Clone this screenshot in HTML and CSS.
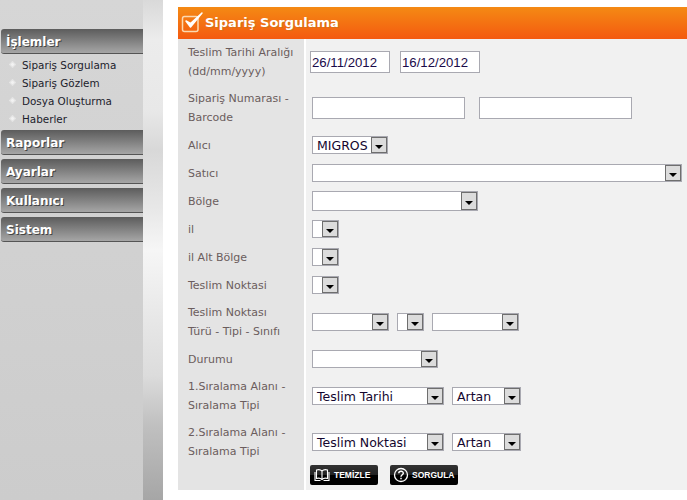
FILE: index.html
```html
<!DOCTYPE html>
<html>
<head>
    <meta charset="UTF-8">
    <title>Sipariş Sorgulama</title>
    <link rel="stylesheet" href="styles.css">
</head>
<body>
    <div class="page">
        <div class="sidebar">
            <div class="menu-head">İşlemler</div>
            <ul class="submenu">
                <li>Sipariş Sorgulama</li>
                <li>Sipariş Gözlem</li>
                <li>Dosya Oluşturma</li>
                <li>Haberler</li>
            </ul>
            <div class="menu-head">Raporlar</div>
            <div class="menu-head">Ayarlar</div>
            <div class="menu-head">Kullanıcı</div>
            <div class="menu-head">Sistem</div>
        </div>
        <div class="band"></div>
        <div class="content">
            <div class="title">
                <svg class="title-icon" width="24" height="26" viewBox="0 0 24 26">
                    <rect x="1.500" y="7.500" width="15.500" height="15" rx="2" fill="none" stroke="#fbd9b0" stroke-width="1.500"/>
                    <path d="M5 12 L9.500 18 L21 4 L9.500 14.500 Z" fill="#fff" stroke="#fff" stroke-width="1.500" stroke-linejoin="round"/>
                </svg>
                Sipariş Sorgulama
            </div>

            <div class="row tall">
                <div class="lbl">Teslim Tarihi Aralığı (dd/mm/yyyy)</div>
                <div class="fld date-fld">
                    <input class="txt date" type="text" value="26/11/2012">
                    <input class="txt date" type="text" value="16/12/2012">
                </div>
            </div>
            <div class="row tall">
                <div class="lbl">Sipariş Numarası - Barcode</div>
                <div class="fld gap14">
                    <input class="txt num" type="text">
                    <input class="txt num" type="text">
                </div>
            </div>
            <div class="row">
                <div class="lbl">Alıcı</div>
                <div class="fld"><div class="sel w76"><span class="val">MIGROS</span><span class="arrow"><i></i></span></div></div>
            </div>
            <div class="row">
                <div class="lbl">Satıcı</div>
                <div class="fld"><div class="sel w370"><span class="val"></span><span class="arrow"><i></i></span></div></div>
            </div>
            <div class="row">
                <div class="lbl">Bölge</div>
                <div class="fld"><div class="sel w166 h20"><span class="val"></span><span class="arrow"><i></i></span></div></div>
            </div>
            <div class="row">
                <div class="lbl">il</div>
                <div class="fld"><div class="sel w27"><span class="val"></span><span class="arrow"><i></i></span></div></div>
            </div>
            <div class="row">
                <div class="lbl">il Alt Bölge</div>
                <div class="fld"><div class="sel w27"><span class="val"></span><span class="arrow"><i></i></span></div></div>
            </div>
            <div class="row">
                <div class="lbl">Teslim Noktasi</div>
                <div class="fld"><div class="sel w27"><span class="val"></span><span class="arrow"><i></i></span></div></div>
            </div>
            <div class="row tall">
                <div class="lbl"><span>Teslim Noktası<br>Türü - Tipi - Sınıfı</span></div>
                <div class="fld gap8">
                    <div class="sel w77"><span class="val"></span><span class="arrow"><i></i></span></div>
                    <div class="sel w27"><span class="val"></span><span class="arrow"><i></i></span></div>
                    <div class="sel w87"><span class="val"></span><span class="arrow"><i></i></span></div>
                </div>
            </div>
            <div class="row">
                <div class="lbl">Durumu</div>
                <div class="fld"><div class="sel w126"><span class="val"></span><span class="arrow"><i></i></span></div></div>
            </div>
            <div class="row tall">
                <div class="lbl">1.Sıralama Alanı - Sıralama Tipi</div>
                <div class="fld gap8">
                    <div class="sel w132"><span class="val">Teslim Tarihi</span><span class="arrow"><i></i></span></div>
                    <div class="sel w69"><span class="val">Artan</span><span class="arrow"><i></i></span></div>
                </div>
            </div>
            <div class="row tall">
                <div class="lbl">2.Sıralama Alanı - Sıralama Tipi</div>
                <div class="fld gap8">
                    <div class="sel w132"><span class="val">Teslim Noktasi</span><span class="arrow"><i></i></span></div>
                    <div class="sel w69"><span class="val">Artan</span><span class="arrow"><i></i></span></div>
                </div>
            </div>
            <div class="row last">
                <div class="lbl"></div>
                <div class="fld btn-fld">
                    <div class="btn">
                        <svg width="18" height="14" viewBox="0 0 18 14">
                            <path d="M9 3 C7.500 1.500 5 1.500 3.500 2 L3.500 10.500 C5 10 7.500 10 9 11.500 C10.500 10 13 10 14.500 10.500 L14.500 2 C13 1.500 10.500 1.500 9 3 Z M9 3 L9 11.500 M2 4 L2 12.500 L7.500 12.500 M16 4 L16 12.500 L10.500 12.500" fill="none" stroke="#fff" stroke-width="1.100"/>
                        </svg>
                        <span>TEMİZLE</span>
                    </div>
                    <div class="btn">
                        <svg width="16" height="16" viewBox="0 0 16 16">
                            <circle cx="8" cy="8" r="6.500" fill="none" stroke="#fff" stroke-width="1.300"/>
                            <path d="M5.800 6.300 C5.800 3.600 10.300 3.600 10.300 6.200 C10.300 7.800 8 7.800 8 9.800 M8 10.700 L8 12.200" fill="none" stroke="#fff" stroke-width="1.500"/>
                        </svg>
                        <span>SORGULA</span>
                    </div>
                </div>
            </div>
        </div>
    </div>
</body>
</html>
```

FILE: styles.css
```css
html, body {
    margin: 0;
    padding: 0;
}
body {
    background: #ffffff;
    font-family: 'DejaVu Sans', sans-serif;
    overflow: hidden;
}
.page {
    display: flex;
    height: 500px;
    width: 687px;
}

/* left menu */
.sidebar {
    width: 142px;
    padding: 29px 0 0 1px;
    background: linear-gradient(to bottom, #d6d6d6, #cccccc);
}
.band {
    width: 20px;
    background: linear-gradient(to bottom, #d9d9d9 0, #ececec 8%, #e8e8e8 22%, #d8d8d8 30%, #e8e8e8 42%, #f6f6f6 50%, #e6e6e6 65%, #dcdcdc 75%, #c0c0c0 85%, #a6a6a6 100%);
}
.menu-head {
    height: 24px;
    line-height: 27px;
    margin-bottom: 4px;
    padding-left: 5px;
    border-bottom: 1px solid #555555;
    border-radius: 3px 0 0 3px;
    background: linear-gradient(to bottom, #5c5c5c, #a6a6a6);
    color: #ffffff;
    font-size: 12px;
    font-weight: bold;
    text-shadow: 1px 1px 0 #444444;
}
.submenu {
    list-style: none;
    margin: -2px 0 0;
    padding: 0 0 2px 21px;
    font-size: 10.400px;
    color: #1c1c2c;
}
.submenu li {
    position: relative;
    height: 18px;
    line-height: 18px;
}
.submenu li::before {
    content: "";
    position: absolute;
    left: -12px;
    top: 6px;
    width: 5px;
    height: 5px;
    background: #f2f2f2;
    box-shadow: inset 0 0 0 1px #e2e2e2;
    transform: rotate(45deg);
}

/* form panel */
.content {
    width: 509px;
    margin-left: 15px;
    padding-top: 7px;
}
.title {
    display: flex;
    align-items: center;
    height: 32px;
    padding: 0 0 2px 3px;
    box-sizing: border-box;
    background: linear-gradient(to bottom, #f48a14, #f45a10);
    color: #ffffff;
    font-size: 13px;
    font-weight: bold;
    text-shadow: 1px 1px 0 #d8701a;
}
.row {
    display: flex;
    height: 28px;
}
.tall {
    height: 46px;
}
.last {
    height: 25px;
}
.lbl {
    display: flex;
    align-items: center;
    width: 108px;
    padding: 0 8px 0 10px;
    border-right: 2px solid #ffffff;
    background: #e4e4e4;
    color: #6b5d5d;
    font-size: 11px;
    line-height: 19px;
}
.fld {
    flex: 1;
    display: flex;
    align-items: center;
    padding-left: 6px;
    background: #f1f1f1;
}
.date-fld {
    gap: 10px;
    padding-left: 4px;
}
.gap14 {
    gap: 14px;
}
.gap8 {
    gap: 8px;
}
.btn-fld {
    align-items: flex-start;
    gap: 12px;
    padding-left: 4px;
}

input.txt {
    box-sizing: border-box;
    margin: 0;
    padding: 0 1px;
    height: 22px;
    border: 1px solid #a9a9b1;
    background: #ffffff;
    color: #1a0a4a;
    font-family: 'Liberation Sans', sans-serif;
    font-size: 13.200px;
}
.date {
    width: 80px;
}
.num {
    width: 153px;
}

/* drawn selects */
.sel {
    box-sizing: border-box;
    display: flex;
    height: 18px;
    border: 1px solid #a9a9b1;
    background: #ffffff;
}
.val {
    flex: 1;
    padding-left: 4px;
    color: #14062e;
    font-size: 12.500px;
    line-height: 17px;
    white-space: nowrap;
    overflow: hidden;
}
.arrow {
    box-sizing: border-box;
    display: flex;
    justify-content: center;
    align-items: center;
    width: 16px;
    border: 1px solid #6e6e6e;
    background: #dcdcdc;
}
.arrow i {
    width: 0;
    height: 0;
    margin-top: 3px;
    border-left: 4px solid transparent;
    border-right: 4px solid transparent;
    border-top: 4px solid #000000;
}
.w27 { width: 27px; }
.w69 { width: 69px; }
.w76 { width: 76px; }
.w77 { width: 77px; }
.w87 { width: 87px; }
.w126 { width: 126px; }
.w132 { width: 132px; }
.w166 { width: 166px; }
.w370 { width: 370px; }
.h20 { height: 20px; }

.btn {
    box-sizing: border-box;
    display: flex;
    align-items: center;
    gap: 3px;
    width: 68px;
    height: 20px;
    padding-left: 3px;
    border-radius: 2px;
    background: linear-gradient(to bottom, #333333 0, #222222 50%, #000000 50%);
    color: #ffffff;
    font-family: 'Liberation Sans', sans-serif;
    font-size: 8.500px;
    font-weight: bold;
}
```
